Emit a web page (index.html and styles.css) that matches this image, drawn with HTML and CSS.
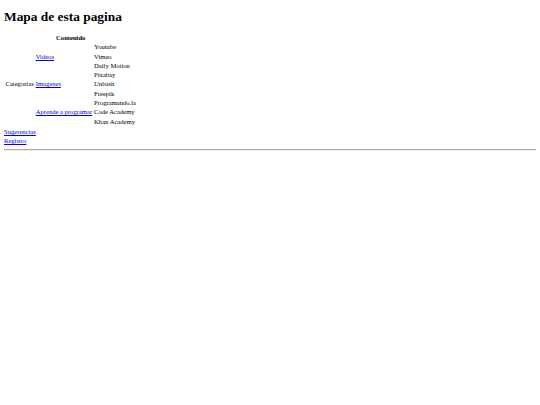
FILE: index.html
```html
<!DOCTYPE html>
<html lang="es">
<head>
<meta charset="utf-8">
<title>Mapa de esta pagina</title>
<link rel="stylesheet" href="styles.css">
</head>
<body>
<h1 class="title">Mapa de esta pagina</h1>
<table class="map">
  <thead>
    <tr><th colspan="3">Contenido</th></tr>
  </thead>
  <tbody>
    <tr><td rowspan="9">Categorias</td><td rowspan="3"><a href="#">Videos</a></td><td>Youtube</td></tr>
    <tr><td>Vimeo</td></tr>
    <tr><td>Daily Motion</td></tr>
    <tr><td rowspan="3"><a href="#">Imagenes</a></td><td>Pixabay</td></tr>
    <tr><td>Unbash</td></tr>
    <tr><td>Freepik</td></tr>
    <tr><td rowspan="3"><a href="#">Aprende a programar</a></td><td>Programando.la</td></tr>
    <tr><td>Code Academy</td></tr>
    <tr><td>Khan Academy</td></tr>
  </tbody>
</table>
<a href="#">Sugerencias</a><br>
<a href="#">Registro</a>
<hr class="rule">
</body>
</html>
```

FILE: styles.css
```css
body {
  margin: 4px;
  font-family: "Liberation Serif", "Times New Roman", serif;
  font-size: 6.6px;
  line-height: 9.4px;
  color: #000;
  background: #fff;
}
.title {
  font-size: 13.4px;
  line-height: 15.2px;
  margin: 5.2px 0 8.6px;
}
.map {
  border-spacing: 1px;
}
.map td, .map th {
  padding: 0 0.5px;
  line-height: 8.3px;
}
a {
  color: #0000ee;
}
.rule {
  margin: 3.3px 0;
  border: 0;
  border-top: 1px solid #aaa;
  border-bottom: 1px solid #eee;
}
```
